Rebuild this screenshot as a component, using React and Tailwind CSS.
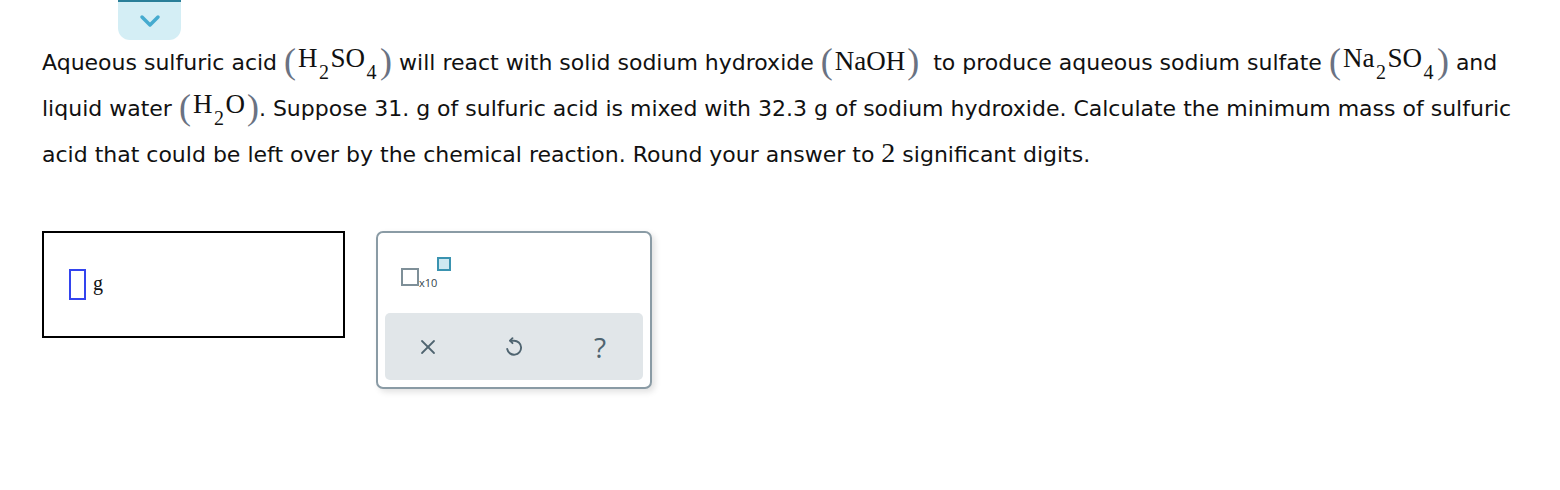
import { X } from 'lucide-react'

function Paren({ children }) {
  return (
    <span className="inline-flex items-center font-['Liberation_Serif',serif] text-[27px] leading-none align-middle -mt-[6px]">
      <span className="text-[36px] text-gray-500 font-light pr-[2px]">(</span>
      <span>{children}</span>
      <span className="text-[36px] text-gray-500 font-light pl-[2px]">)</span>
    </span>
  )
}

function Sub({ children }) {
  return <sub className="text-[20px] relative top-[5px] align-sub leading-none px-[1.5px]">{children}</sub>
}

function UndoIcon() {
  return (
    <svg width="24" height="24" viewBox="0 0 24 24" fill="none" stroke="currentColor" strokeWidth="1.9" strokeLinecap="round" strokeLinejoin="round">
      <path d="M10.5 3.2 L8 5.7 L10.5 8.2" />
      <path d="M8.3 5.7 H12 A7 7 0 1 1 5.2 14" />
    </svg>
  )
}

export default function App() {
  return (
    <div className="w-[1560px] h-[490px] bg-white relative font-['DejaVu_Sans',Verdana,sans-serif] text-[#111]">
      {/* collapse tab */}
      <div className="absolute left-[118px] top-0 w-[63px] h-[40px] bg-[#d4eef5] border-t-2 border-[#2a7f99] rounded-b-xl flex items-center justify-center">
        <svg width="22" height="14" viewBox="0 0 22 14" fill="none">
          <path d="M3 3 L11 11 L19 3" stroke="#45abcf" strokeWidth="3.5" strokeLinecap="round" strokeLinejoin="round" />
        </svg>
      </div>

      <div className="pt-[40px] pl-[42px] pr-[20px] h-[186px]">
        <p className="text-[22px] leading-[46px] whitespace-nowrap">
          Aqueous sulfuric acid{' '}
          <Paren>H<Sub>2</Sub>SO<Sub>4</Sub></Paren> will react with solid sodium hydroxide{' '}
          <Paren>NaOH</Paren>{'\u00a0 '}to produce aqueous sodium sulfate{' '}
          <Paren>Na<Sub>2</Sub>SO<Sub>4</Sub></Paren> and
          <br />
          liquid water <Paren>H<Sub>2</Sub>O</Paren>. Suppose 31. g of sulfuric acid is mixed with 32.3 g of sodium hydroxide. Calculate the minimum mass of sulfuric
          <br />
          acid that could be left over by the chemical reaction. Round your answer to{' '}
          <span className="font-['Liberation_Serif',serif] text-[28px] leading-none">2</span> significant digits.
        </p>
      </div>

      <div className="flex items-start gap-[31px] pl-[42px] mt-[45px]">
        {/* answer box */}
        <div className="w-[303px] h-[107px] border-2 border-black flex items-center pl-[25px] gap-[7px]">
          <div className="w-[17px] h-[31px] border-2 border-[#3344ee]" />
          <span className="font-['Liberation_Serif',serif] text-[20px] leading-none -mt-[4px]">g</span>
        </div>

        {/* keypad */}
        <div className="w-[276px] h-[158px] border-2 border-[#8a9ba5] rounded-[7px] bg-white shadow-[3px_3px_6px_rgba(0,0,0,0.12)] flex flex-col px-[7px] pb-[7px]">
          <div className="h-[80px] flex items-center pl-[16px]">
            <div className="relative flex items-end mt-[8px]">
              <div className="w-[18px] h-[18px] border-2 border-[#7e8f98]" />
              <span className="text-[11px] leading-none font-['Open_Sans',sans-serif] text-[#34444c] -mb-[2px]">x10</span>
              <div className="absolute left-[36px] -top-[11px] w-[14px] h-[14px] border-2 border-[#3a93b0] bg-[#cfe9f1]" />
            </div>
          </div>
          <div className="flex-1 bg-[#e1e6e9] rounded-[5px] grid grid-cols-3 items-center text-[#4f6470]">
            <div className="flex justify-center"><X size={24} strokeWidth={1.8} /></div>
            <div className="flex justify-center"><UndoIcon /></div>
            <div className="flex justify-center">
              <span className="font-['Open_Sans',sans-serif] text-[28px] leading-none">?</span>
            </div>
          </div>
        </div>
      </div>
    </div>
  )
}
